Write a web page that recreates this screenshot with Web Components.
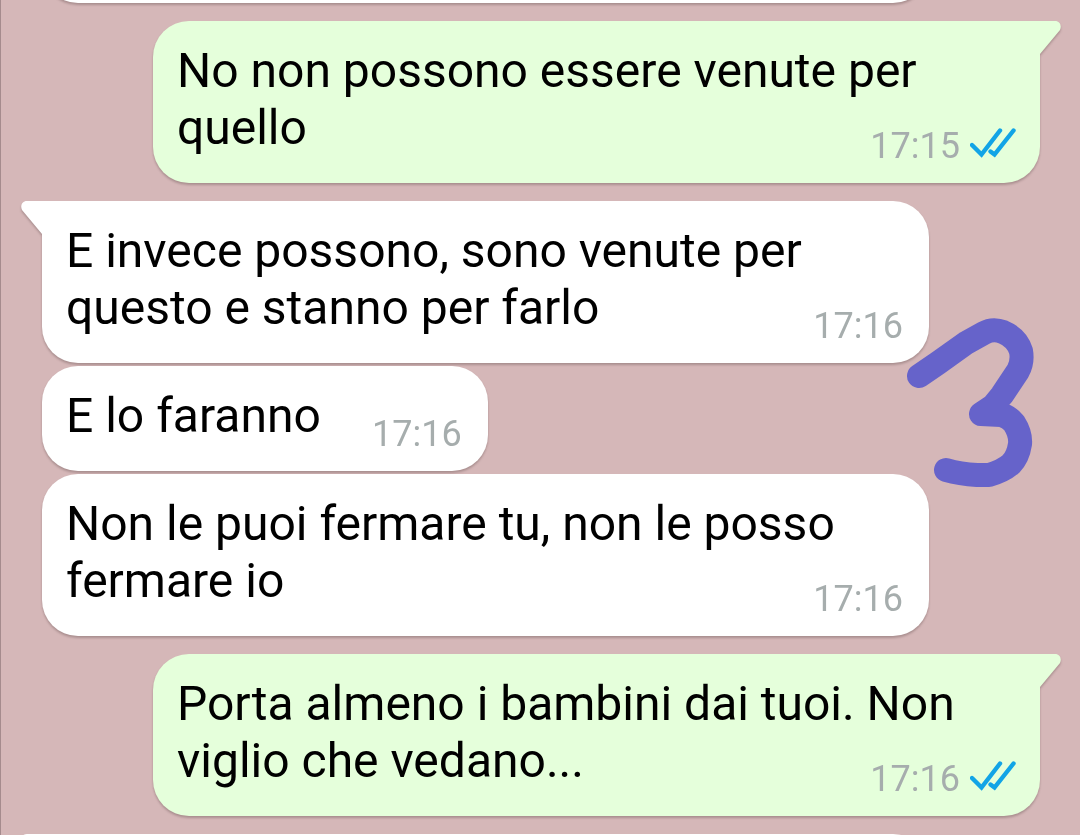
<!DOCTYPE html>
<html lang="it">
<head>
<meta charset="utf-8">
<meta name="viewport" content="width=device-width, initial-scale=1">
<title>Chat</title>
<style>
  body { margin: 0; background: #d5b7b8; font-family: Roboto, "Liberation Sans", sans-serif; color: #000; }
</style>
</head>
<body>
<chat-thread>
  <chat-message side="in" peek></chat-message>
  <chat-message side="out" first time="17:15">No non possono essere venute per quello</chat-message>
  <chat-message side="in" first time="17:16">E invece possono, sono venute per questo e stanno per farlo</chat-message>
  <chat-message side="in" time="17:16">E lo faranno</chat-message>
  <chat-message side="in" time="17:16">Non le puoi fermare tu, non le posso fermare io</chat-message>
  <chat-message side="out" first time="17:16">Porta almeno i bambini dai tuoi. Non viglio che vedano...</chat-message>
  <chat-message side="in" first></chat-message>
  <number-mark slot="mark"></number-mark>
</chat-thread>

<script>
class ChatThread extends HTMLElement {
  constructor() {
    super();
    this.attachShadow({ mode: "open" }).innerHTML = `
      <style>
        :host { display: block; position: relative; height: 100vh; overflow: hidden; box-sizing: border-box; border-left: 1px solid #a58b8d; }
        main { display: flex; flex-direction: column; gap: 3px; padding: 0 40px 0 41px; }
        slot[name="mark"]::slotted(*) { position: absolute; top: 316px; right: 40px; }
      </style>
      <main><slot></slot></main>
      <slot name="mark"></slot>`;
  }
}

class ReadTicks extends HTMLElement {
  constructor() {
    super();
    this.attachShadow({ mode: "open" }).innerHTML = `
      <style>
        :host { display: block; }
        svg { display: block; }
      </style>
      <svg width="46" height="42" viewBox="0 0 46 42" fill="none" stroke="#12a4e6" stroke-width="4.400" stroke-linecap="round" role="img" aria-label="Letto">
        <path d="M2 20L11.500 29.500L30 5.500M20.500 26.500L24.500 29.500L43.500 5.500"/>
      </svg>`;
  }
}

class ChatMessage extends HTMLElement {
  connectedCallback() {
    if (this.shadowRoot) return;
    const time = this.getAttribute("time");
    const out = this.getAttribute("side") === "out";
    this.attachShadow({ mode: "open" }).innerHTML = `
      <style>
        :host {
          --fill: #fff; --reserve: 141px;
          display: grid; position: relative; align-self: flex-start; flex: none;
          box-sizing: border-box; max-width: min(89%, 887px);
          padding: 21px 26px 27px 24px; border-radius: 36px; background: var(--fill);
          filter: drop-shadow(0 2px 1px rgba(70, 50, 50, .3));
        }
        :host([side="out"]) { --fill: #e5ffdb; --reserve: 196px; align-self: flex-end; padding-right: 24px; }
        :host([first]) { margin-top: 15px; }
        :host([first][side="in"]) { border-top-left-radius: 0; }
        :host([first][side="out"]) { border-top-right-radius: 0; }
        :host([peek]) { margin-top: -102px; }
        :host(:not([time])) { width: 89%; height: 105px; }
        p { grid-area: 1 / 1; margin: 0; font-size: 48px; line-height: 57px; }
        p::after { content: ""; display: inline-block; width: var(--reserve); height: 1px; }
        .meta { grid-area: 1 / 1; place-self: end; display: flex; gap: 10px; margin-bottom: -11px; }
        time { font-size: 36px; line-height: 42px; color: #a6adad; }
        .tail { position: absolute; top: 0; width: 22px; height: 34px; fill: var(--fill); }
        :host([side="out"]) .tail { left: calc(100% - 1px); }
        :host([side="in"]) .tail { right: calc(100% - 1px); transform: scaleX(-1); }
      </style>
      ${this.hasAttribute("first") ? `<svg class="tail" viewBox="0 0 22 34" aria-hidden="true"><path d="M0 0H16C21 0 23 5 21 9L1 33V34H0Z"/></svg>` : ""}
      <p><slot></slot></p>
      ${time ? `<div class="meta"><time datetime="${time}">${time}</time>${out ? "<read-ticks></read-ticks>" : ""}</div>` : ""}`;
  }
}

class NumberMark extends HTMLElement {
  constructor() {
    super();
    this.attachShadow({ mode: "open" }).innerHTML = `
      <style>
        :host { display: block; }
        svg { display: block; }
      </style>
      <svg width="135" height="174" viewBox="905 316 135 174" fill="none" stroke="#6663ca" stroke-width="24" stroke-linecap="round" stroke-linejoin="round" aria-hidden="true">
        <path d="M919 376L938 363L966 343L984 333Q993 328 1003 332Q1017 338 1021 351Q1023 362 1018 371L1002 395L993 406L981 414L1001 415Q1008 416 1014 423Q1021 434 1020 444Q1018 457 1011 464Q1003 471 989 475H977Q960 474 946 470"/>
      </svg>`;
  }
}

customElements.define("chat-thread", ChatThread);
customElements.define("read-ticks", ReadTicks);
customElements.define("chat-message", ChatMessage);
customElements.define("number-mark", NumberMark);
</script>
</body>
</html>
